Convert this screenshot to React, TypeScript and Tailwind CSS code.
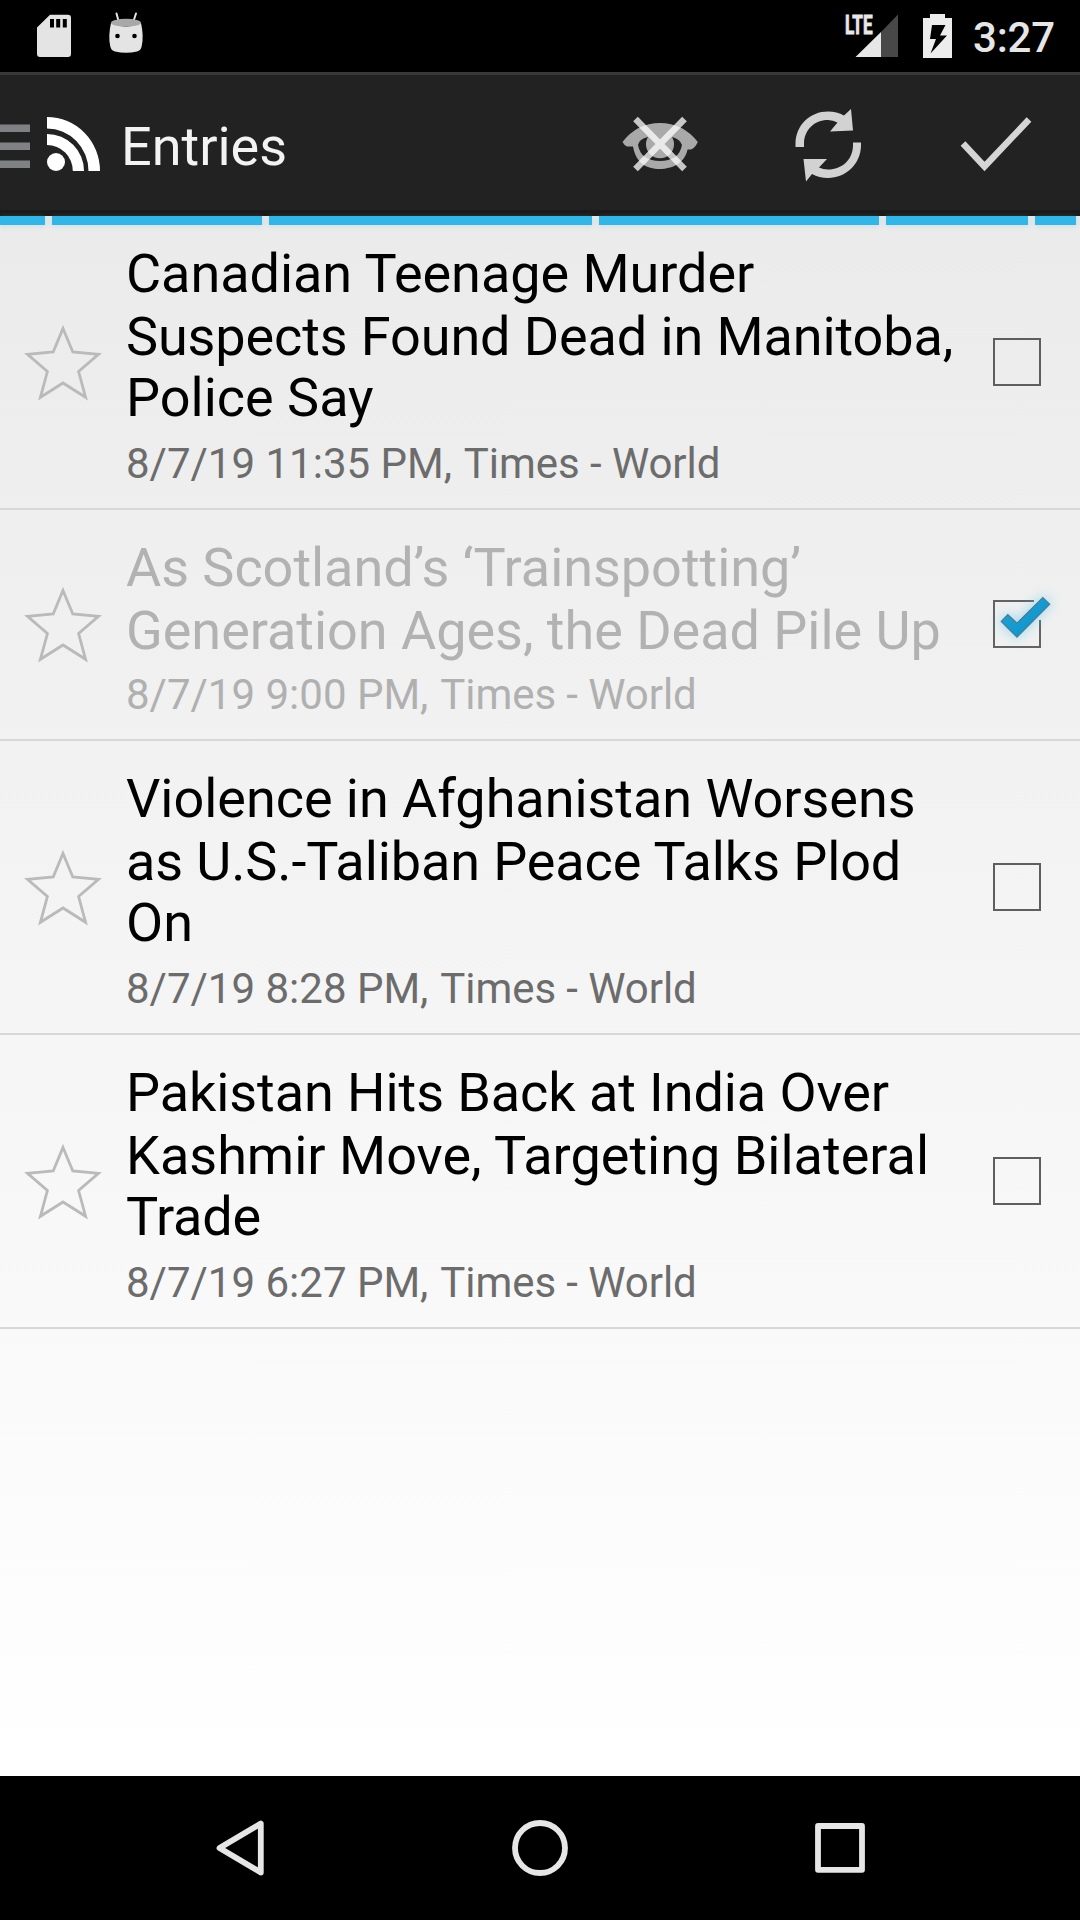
type Line = { text: string; tracking?: string };
type Entry = { lines: Line[]; date: string; read?: boolean };

const entries: Entry[] = [
  {
    lines: [
      { text: "Canadian Teenage Murder", tracking: "tracking-[-0.05px]" },
      { text: "Suspects Found Dead in Manitoba,", tracking: "tracking-[-0.11px]" },
      { text: "Police Say" },
    ],
    date: "8/7/19 11:35 PM,",
  },
  {
    lines: [
      { text: "As Scotland’s ‘Trainspotting’", tracking: "tracking-[-0.04px]" },
      { text: "Generation Ages, the Dead Pile Up", tracking: "tracking-[-0.03px]" },
    ],
    date: "8/7/19 9:00 PM,",
    read: true,
  },
  {
    lines: [
      { text: "Violence in Afghanistan Worsens", tracking: "tracking-[-0.04px]" },
      { text: "as U.S.-Taliban Peace Talks Plod", tracking: "tracking-[-0.11px]" },
      { text: "On" },
    ],
    date: "8/7/19 8:28 PM,",
  },
  {
    lines: [
      { text: "Pakistan Hits Back at India Over", tracking: "tracking-[-0.08px]" },
      { text: "Kashmir Move, Targeting Bilateral" },
      { text: "Trade", tracking: "tracking-[-0.2px]" },
    ],
    date: "8/7/19 6:27 PM,",
  },
];

const lineHeights = ["h-[63px]", "h-[61px]", "h-[63px]"];

function StatusBar() {
  return (
    <header className="flex h-[72px] shrink-0 items-start justify-between bg-black text-[#e6e6e6]">
      <svg width="160" height="72" viewBox="0 0 160 72">
        <path fill="#e4e4e4" fillRule="evenodd" d="M50 14.7H68Q71 14.7 71 18V54Q71 57 68 57H40Q37 57 37 54V27.500ZM50 19V27.500H54V19ZM56.200 19V27.500H60.200V19ZM62.800 19V27.500H66.800V19Z" />
        <path stroke="#e4e4e4" strokeWidth="2" strokeLinecap="round" d="M116.500 13.500L118.800 22M136 13.500L133.200 22" />
        <path fill="#e4e4e4" d="M111 23Q126 30 141 23Q144 36 141.700 46Q141 50.500 137 51.500Q126 54 115 51.500Q111 50.500 110.200 46Q108 36 111 23Z" />
        <ellipse cx="126" cy="22.700" rx="15" ry="3.900" fill="#a8a8a8" />
        <circle cx="117.500" cy="36" r="2.300" fill="#000" />
        <circle cx="134.500" cy="36" r="2.300" fill="#000" />
      </svg>
      <div className="flex">
        <svg width="153" height="72" viewBox="820 0 153 72">
          <text x="845" y="33.500" textLength="27.500" lengthAdjust="spacingAndGlyphs" fontSize="26" fontWeight="700" fill="#e8e8e8" stroke="#e8e8e8" strokeWidth="0.900" fontFamily="Roboto, sans-serif">LTE</text>
          <path fill="#484848" d="M881 32L898 14.500V57H881Z" />
          <path fill="#e6e6e6" d="M881 32V57H855.500Z" />
          <path fill="#ececec" fillRule="evenodd" d="M930 14H945V18H952V58H923V18H930ZM932 25L930 39H936L930.500 53.500L947 35.500H940L945.500 25Z" />
        </svg>
        <span className="mt-[13px] block w-[107px] text-[42px] font-medium leading-[49px] tracking-[-0.2px]">3:27</span>
      </div>
    </header>
  );
}

function ActionBar() {
  return (
    <div className="flex h-[144px] shrink-0 items-center border-t-[3px] border-b-[6px] border-t-[#393939] border-b-[#1a1a1a] bg-[#222222]">
      <svg className="h-[135px] w-[121px] shrink-0" viewBox="0 75 121 135">
        <path fill="#808185" d="M0 124.500H30V132H0ZM0 142.500H30V150H0ZM0 160.500H30V168H0Z" />
        <circle cx="56" cy="162" r="9" fill="#fff" />
        <path fill="#fff" d="M47 117A53 54 0 0 1 100 171H88.500A41.500 42.500 0 0 0 47 128.500ZM47 134A37 37 0 0 1 84 171H72.800A25.800 26 0 0 0 47 145Z" />
      </svg>
      <h1 className="mt-[7px] grow text-[54px] leading-[63px] text-[#f3f3f3]">Entries</h1>
      <svg width="480" height="135" viewBox="600 75 480 135">
        <path fill="#a9a9a9" fillRule="evenodd" d="M622.500 142Q637 123 660 123Q683 123 697.800 142Q695 148 691 149.500H687.500C685 163 672 169 660 169C646 169 636 163 633 146.500H627Q624 145 622.500 142ZM638 145C640 156 648 161 660 161C672 161 680 156 682 145Q680 139 672 137A14 14 0 1 1 648 137Q639 139 638 145Z" />
        <path stroke="#fff" strokeOpacity=".75" strokeWidth="6.500" fill="none" d="M635.500 119L684.500 169M684.500 119L635.500 169" />
        <g fill="#d2d2d2">
          <path d="M795.500 147V143C796 125 810 111.500 828 111.500Q837 111.500 844 115.500L851 109L853 130.500L830 131.500L837.500 122.500Q833 120 828 120C814 120 804.500 130 804 143V147Z" />
          <path d="M861 142.500V146C860.500 164 846 178 828 178Q819 178 812 174L806 181.500L803.500 159L827 159L819 167.500Q823 169.500 828 169.500C842 169.500 852.500 160 853 146V142.500Z" />
        </g>
        <path d="M963 143.500L984.500 166.500L1029 119.500" fill="none" stroke="#d5d5d5" strokeWidth="6.500" />
      </svg>
    </div>
  );
}

function Progress() {
  const bar = "h-[9px] bg-[#33b5e5] shadow-[0_1px_5px_rgba(120,200,235,0.35)]";
  return (
    <div className="absolute inset-x-0 top-0 flex gap-[7px] bg-[#e6e9eb]">
      <div className={`${bar} w-[45px]`} />
      <div className={`${bar} w-[210px]`} />
      <div className={`${bar} w-[323px]`} />
      <div className={`${bar} w-[280px]`} />
      <div className={`${bar} w-[142px]`} />
      <div className={`${bar} w-[41px]`} />
    </div>
  );
}

function Star() {
  return (
    <svg className="h-[80px] w-[126px] shrink-0" viewBox="0 322 126 80">
      <path d="M63 328.500L72.800 352L98.500 354.300L78.600 371.500L85.600 397.300L63 383L40.400 397.300L47.400 371.500L27.500 354.300L53.200 352Z" fill="none" stroke="#bababa" strokeWidth="2.800" strokeMiterlimit="10" />
    </svg>
  );
}

function Check({ checked }: { checked?: boolean }) {
  return (
    <svg className="h-[96px] w-[96px] shrink-0" viewBox="969 576 96 96" role="checkbox" aria-checked={!!checked}>
      {checked ? (
        <>
          <defs>
            <filter id="glow" x="-40%" y="-40%" width="180%" height="180%">
              <feGaussianBlur stdDeviation="6" />
            </filter>
            <linearGradient id="tick" x1="0" y1="0" x2="1" y2="1">
              <stop offset="0" stopColor="#27a3d8" />
              <stop offset="1" stopColor="#0690c6" />
            </linearGradient>
          </defs>
          <path d="M1034 601H994V647H1040V620" fill="none" stroke="#636363" strokeWidth="2" />
          <path d="M1001 621.500L1008 615L1017 623.500L1043 597.500L1049.500 604L1017 637Z" fill="#5cc4ee" stroke="#5cc4ee" strokeWidth="4" opacity=".5" filter="url(#glow)" />
          <path d="M1001.300 621.500L1007.800 614.700L1017 623.300L1042.800 597.600L1049.600 604.300L1017 637Z" fill="url(#tick)" stroke="#43809a" strokeWidth="1.300" />
        </>
      ) : (
        <rect x="994" y="601" width="46" height="46" fill="none" stroke="#5e5e5e" strokeWidth="2" />
      )}
    </svg>
  );
}

function Row({ entry }: { entry: Entry }) {
  const short = entry.lines.length < 3;
  return (
    <li className={`flex items-center border-b-2 border-[#d7d7d7] ${short ? "h-[231px]" : "h-[294px]"}`}>
      <div className={short ? "-mt-px" : ""}>
        <Star />
      </div>
      <div className={`h-full grow pt-[26px] ${entry.read ? "text-[#b2b2b2]" : "text-black"}`}>
        {entry.lines.map((line, i) => (
          <div key={line.text} className={`${lineHeights[i]} whitespace-nowrap text-[54px] leading-[63px] ${line.tracking ?? ""}`}>
            {line.text}
          </div>
        ))}
        <div className={`mt-[10px] whitespace-nowrap text-[42px] leading-[49px] ${entry.read ? "text-[#b0b0b0]" : "text-[#6c6c6c]"}`}>
          {entry.date} <span className="pl-[1.5px] tracking-[-0.06px]">Times - World</span>
        </div>
      </div>
      <div className={`-ml-[20px] mr-[15px] ${short ? "-mt-px" : ""}`}>
        <Check checked={entry.read} />
      </div>
    </li>
  );
}

function NavBar() {
  return (
    <nav className="h-[144px] shrink-0 bg-black">
      <svg width="1080" height="144" viewBox="0 1776 1080 144" fill="none" stroke="#e6e6e6" strokeWidth="5.800" strokeLinejoin="round">
        <path d="M260.800 1823.500V1872.500L219.500 1848Z" />
        <circle cx="540" cy="1848" r="25" />
        <rect x="818" y="1826" width="44" height="43.800" />
      </svg>
    </nav>
  );
}

export default function App() {
  return (
    <div className="flex h-[1920px] w-[1080px] flex-col overflow-hidden bg-[linear-gradient(to_bottom,#e8e8e8_0,#ffffff_1776px)] font-[Roboto,sans-serif]">
      <StatusBar />
      <ActionBar />
      <main className="relative min-h-0 grow">
        <Progress />
        <ul>
          {entries.map((e) => (
            <Row key={e.date} entry={e} />
          ))}
        </ul>
      </main>
      <NavBar />
    </div>
  );
}
